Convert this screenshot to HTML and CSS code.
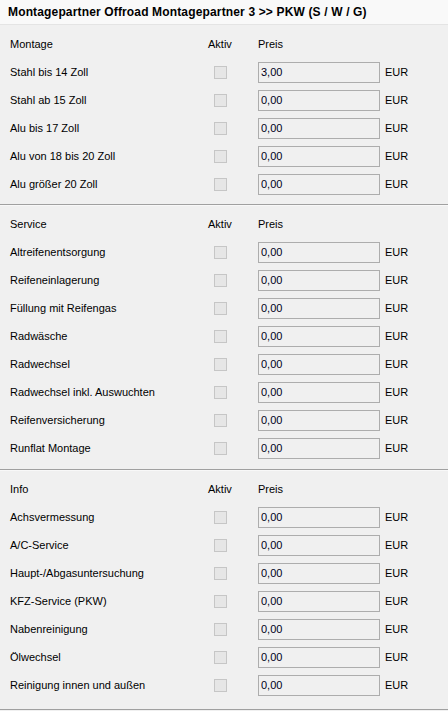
FILE: index.html
```html
<!DOCTYPE html>
<html>
	<head>
		<title>Montagepartner</title><meta charset="utf-8">
		<link rel="stylesheet" href="styles.css">
	</head>
	<body>
		<div class="titel">Montagepartner Offroad Montagepartner 3 &gt;&gt; PKW (S / W / G)</div>

		<div class="gruppe">
			<div class="zeile kopf"><span>Montage</span><span class="aktiv">Aktiv</span><span>Preis</span></div>
			<div class="zeile"><span>Stahl bis 14 Zoll</span><span class="box"></span><input type="text" value="3,00"><span>EUR</span></div>
			<div class="zeile"><span>Stahl ab 15 Zoll</span><span class="box"></span><input type="text" value="0,00"><span>EUR</span></div>
			<div class="zeile"><span>Alu bis 17 Zoll</span><span class="box"></span><input type="text" value="0,00"><span>EUR</span></div>
			<div class="zeile"><span>Alu von 18 bis 20 Zoll</span><span class="box"></span><input type="text" value="0,00"><span>EUR</span></div>
			<div class="zeile"><span>Alu größer 20 Zoll</span><span class="box"></span><input type="text" value="0,00"><span>EUR</span></div>
		</div>

		<div class="gruppe mitte">
			<div class="zeile kopf"><span>Service</span><span class="aktiv">Aktiv</span><span>Preis</span></div>
			<div class="zeile"><span>Altreifenentsorgung</span><span class="box"></span><input type="text" value="0,00"><span>EUR</span></div>
			<div class="zeile"><span>Reifeneinlagerung</span><span class="box"></span><input type="text" value="0,00"><span>EUR</span></div>
			<div class="zeile"><span>Füllung mit Reifengas</span><span class="box"></span><input type="text" value="0,00"><span>EUR</span></div>
			<div class="zeile"><span>Radwäsche</span><span class="box"></span><input type="text" value="0,00"><span>EUR</span></div>
			<div class="zeile"><span>Radwechsel</span><span class="box"></span><input type="text" value="0,00"><span>EUR</span></div>
			<div class="zeile"><span>Radwechsel inkl. Auswuchten</span><span class="box"></span><input type="text" value="0,00"><span>EUR</span></div>
			<div class="zeile"><span>Reifenversicherung</span><span class="box"></span><input type="text" value="0,00"><span>EUR</span></div>
			<div class="zeile"><span>Runflat Montage</span><span class="box"></span><input type="text" value="0,00"><span>EUR</span></div>
		</div>

		<div class="gruppe letzte">
			<div class="zeile kopf"><span>Info</span><span class="aktiv">Aktiv</span><span>Preis</span></div>
			<div class="zeile"><span>Achsvermessung</span><span class="box"></span><input type="text" value="0,00"><span>EUR</span></div>
			<div class="zeile"><span>A/C-Service</span><span class="box"></span><input type="text" value="0,00"><span>EUR</span></div>
			<div class="zeile"><span>Haupt-/Abgasuntersuchung</span><span class="box"></span><input type="text" value="0,00"><span>EUR</span></div>
			<div class="zeile"><span>KFZ-Service (PKW)</span><span class="box"></span><input type="text" value="0,00"><span>EUR</span></div>
			<div class="zeile"><span>Nabenreinigung</span><span class="box"></span><input type="text" value="0,00"><span>EUR</span></div>
			<div class="zeile"><span>Ölwechsel</span><span class="box"></span><input type="text" value="0,00"><span>EUR</span></div>
			<div class="zeile"><span>Reinigung innen und außen</span><span class="box"></span><input type="text" value="0,00"><span>EUR</span></div>
		</div>
	</body>
</html>
```

FILE: styles.css
```css
/* Preisliste Montagepartner */

body {margin: 0; background-color: #f0f0f0; font-family: "Liberation Sans", Arial, sans-serif; font-size: 11px; color: #000;}
.titel {height: 24px; line-height: 24px; padding-left: 8px; background-color: #f9f9f9; border-bottom: 1px solid #e4e4e4; font-weight: bold; font-size: 12px; letter-spacing: 0.15px;}
.gruppe {padding: 9px 0 6px 0; border-bottom: 1px solid #a0a0a0; box-shadow: 0 1px 0 #f8f8f8;}
.gruppe.mitte {padding-bottom: 7px;}
.gruppe.letzte {padding-bottom: 10px;}
.zeile {display: grid; grid-template-columns: 204px 44px 122px auto; align-items: center; height: 28px; padding-left: 10px;}
.zeile.kopf {height: 20px; margin-bottom: 4px;}
.aktiv {margin-left: -6px;}
.box {width: 11px; height: 11px; border: 1px solid #c6c6c6; background-color: #e6e6e6;}
input {box-sizing: border-box; width: 122px; height: 21px; margin: 0; padding: 0 2px; border: 1px solid #adadad; background-color: #f0f0f0; font-family: "Liberation Sans", Arial, sans-serif; font-size: 11px; color: #000020; outline: none;}
.zeile input + span {padding-left: 5px;}
```
